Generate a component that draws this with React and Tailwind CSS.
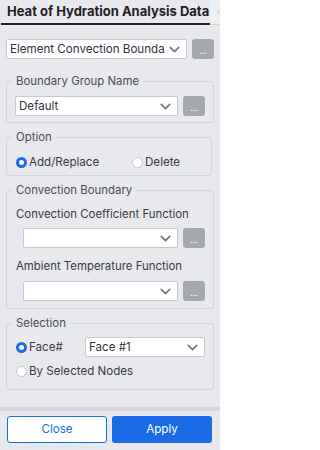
import React from 'react'
import { ChevronDown, ChevronLeft } from 'lucide-react'

const font = { fontFamily: 'Inter, "Noto Sans", sans-serif' }

function Select({ value, className = '' }) {
  return (
    <div
      className={`h-[20px] flex items-center justify-between bg-white border border-[#c6c9ce] rounded-[2px] pl-[3px] pr-[3px] ${className}`}
    >
      <span className="text-[11.6px] leading-[16px] text-[#33333d] whitespace-nowrap overflow-hidden">
        {value}
      </span>
      <ChevronDown size={17} strokeWidth={2.3} className="text-[#75787e] shrink-0" />
    </div>
  )
}

function DotsButton() {
  return (
    <div className="w-[22px] h-[20px] ml-[5px] shrink-0 flex items-end justify-center pb-[4px] bg-[#a5a9af] rounded-[3px] text-white text-[9px] leading-[9px]">
      ...
    </div>
  )
}

function Radio({ checked, label, className = '' }) {
  return (
    <div className={`flex items-center h-[16px] ${className}`}>
      {checked ? (
        <span className="w-[11px] h-[11px] rounded-full border-[3px] border-[#1a6ce6] bg-white shrink-0" />
      ) : (
        <span className="w-[11px] h-[11px] rounded-full border border-[#c3c6cb] bg-white shrink-0" />
      )}
      <span className="ml-[2px] text-[11.6px] leading-[16px] text-[#3a3a46] whitespace-nowrap">{label}</span>
    </div>
  )
}

function Group({ title, children, className = '' }) {
  return (
    <fieldset className={`border border-[#d2d5da] rounded-[3px] px-[8px] ${className}`}>
      <legend className="ml-[-3px] px-[4px] text-[11.4px] leading-[16px] text-[#4a4d55]">{title}</legend>
      {children}
    </fieldset>
  )
}

export default function App() {
  return (
    <div style={font} className="w-[220px] h-[450px] flex flex-col bg-[#e8e9ec] overflow-hidden">
      {/* tab header */}
      <div className="flex h-[25px] border-b border-[#d6d8dc] shrink-0">
        <div className="w-[209px] ml-[1px] shrink-0 border-b-2 border-[#222326] -mb-px flex items-center pl-[6px]">
          <span className="text-[13px] font-bold text-[#1f2024] whitespace-nowrap">
            Heat of Hydration Analysis Data
          </span>
        </div>
        <div className="flex-1 bg-[#eef0f2] flex items-center overflow-hidden">
          <ChevronLeft size={12} strokeWidth={2} className="text-[#c2c5ca] ml-[3px] shrink-0" />
        </div>
      </div>

      {/* body */}
      <div className="flex-1 flex flex-col pl-[6px] pt-[14px]">
        <div className="flex">
          <Select value="Element Convection Bounda" className="w-[181px]" />
          <DotsButton />
        </div>

        <Group title="Boundary Group Name" className="w-[206px] mt-[14px] pb-[6px]">
          <div className="flex mt-[7px]">
            <Select value="Default" className="w-[163px]" />
            <DotsButton />
          </div>
        </Group>

        <Group title="Option" className="w-[206px] mt-[6px] pb-[5px]">
          <div className="flex mt-[9px]">
            <Radio checked label="Add/Replace" className="w-[116px] ml-[1px]" />
            <Radio label="Delete" />
          </div>
        </Group>

        <Group title="Convection Boundary" className="w-[206px] mt-[6px] pb-[7px]">
          <div className="mt-[8px] ml-[1px] text-[11.4px] leading-[16px] text-[#3a3a46]">
            Convection Coefficient Function
          </div>
          <div className="flex mt-[6px] ml-[8px]">
            <Select value="" className="w-[155px]" />
            <DotsButton />
          </div>
          <div className="mt-[10px] ml-[1px] text-[11.4px] leading-[16px] text-[#3a3a46]">
            Ambient Temperature Function
          </div>
          <div className="flex mt-[7px] ml-[8px]">
            <Select value="" className="w-[155px]" />
            <DotsButton />
          </div>
        </Group>

        <Group title="Selection" className="w-[206px] mt-[6px] pb-[10px]">
          <div className="flex items-center mt-[6px]">
            <Radio checked label="Face#" className="w-[69px] ml-[1px]" />
            <Select value="Face #1" className="w-[120px]" />
          </div>
          <Radio label="By Selected Nodes" className="mt-[6px] ml-[1px]" />
        </Group>
      </div>

      {/* footer */}
      <div className="shrink-0 border-t-4 border-[#d6d8dc] flex gap-[5px] pl-[7px] pt-[5px] pb-[7px]">
        <button className="w-[100px] h-[27px] bg-white border border-[#1a6ce6] rounded-[3px] text-[11.6px] text-[#1a6ce6]">
          Close
        </button>
        <button className="w-[100px] h-[27px] bg-[#1a6ce6] rounded-[3px] text-[11.6px] text-white">
          Apply
        </button>
      </div>
    </div>
  )
}
